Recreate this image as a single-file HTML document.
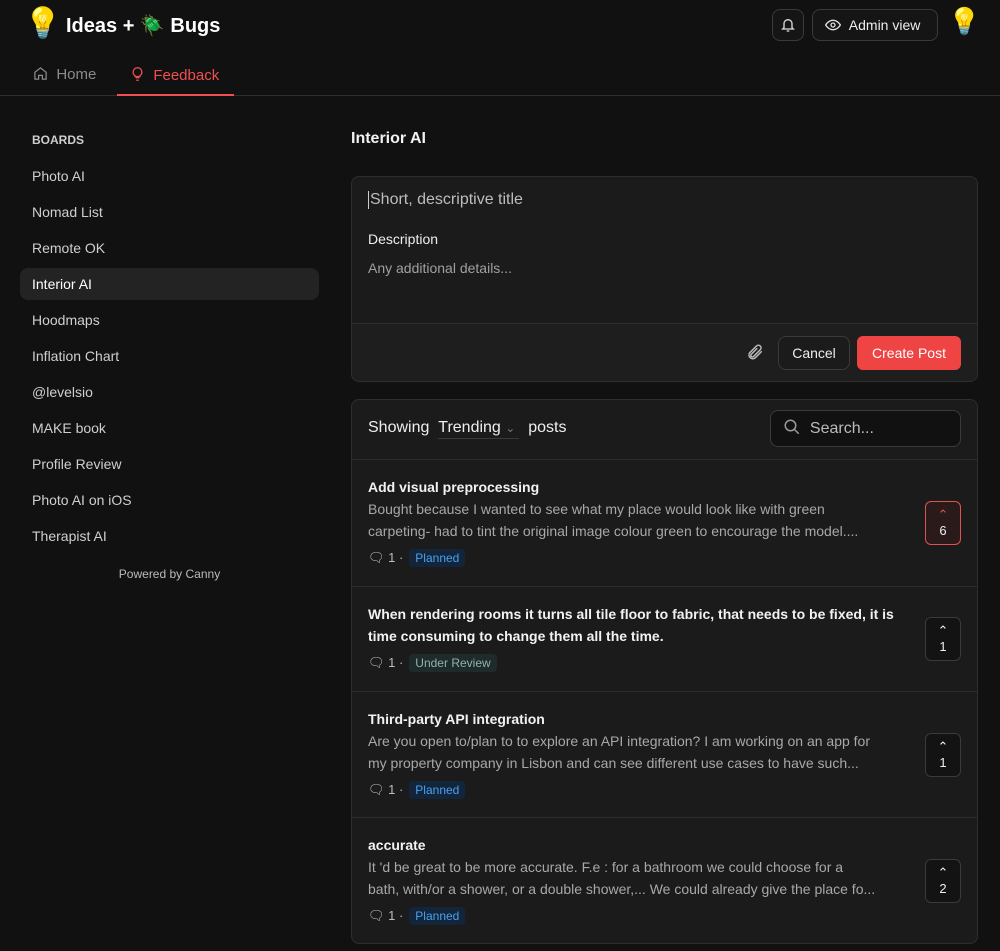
<!DOCTYPE html>
<html><head><meta charset="utf-8"><style>
*{box-sizing:border-box;margin:0;padding:0}
body{width:1000px;height:951px;overflow:hidden;background:#111111;font-family:"Liberation Sans",sans-serif;color:#e8e8e8;position:relative}
.abs{position:absolute}
.hdr{position:absolute;left:0;top:0;width:1000px;height:96px;border-bottom:1px solid #2e2e2e}
.btn{position:absolute;border:1px solid #3a3a3a;border-radius:8px;background:#151515}
.side a{position:absolute;left:20px;width:299px;height:32px;line-height:32px;padding-left:12px;font-size:14px;color:#cfcfcf;border-radius:8px}
.card{position:absolute;left:351px;width:627px;background:#1b1b1b;border:1px solid #2e2e2e;border-radius:8px;overflow:hidden}
.post{position:absolute;left:0;width:625px;border-top:1px solid #2e2e2e;padding:16px 16px}
.pt{font-size:14px;font-weight:bold;color:#f2f2f2;line-height:22px;width:540px}
.pd{font-size:14px;color:#a8a8a8;line-height:22px;width:540px;white-space:nowrap}
.meta{font-size:13px;color:#bbb;margin-top:6px;height:20px;display:flex;align-items:center;gap:6px}
.tag{font-size:12px;padding:2px 6px;border-radius:4px;background:#13253a;color:#4aa0ef}
.tag.rev{background:#1f2a2a;color:#8fb3b0}
.vote{position:absolute;right:16px;width:36px;height:44px;border:1px solid #3a3a3a;border-radius:6px;background:#131313;text-align:center;font-size:13px;color:#eee;padding-top:5px;line-height:16px}
</style></head><body>
<div class="hdr">
<div class="abs" style="left:24px;top:6px;font-size:30px">💡</div>
<div class="abs" style="left:66px;top:13px;font-size:20px;font-weight:bold;color:#fff">Ideas + 🪲 Bugs</div>
<div class="abs" style="left:33px;top:66px;font-size:15px;color:#8a8a8a"><svg width="15" height="15" viewBox="0 0 24 24" fill="none" stroke="#8a8a8a" stroke-width="2" style="vertical-align:-2px"><path d="M3 10l9-7 9 7v11H15v-6H9v6H3z"/></svg> &nbsp;Home</div>
<div class="abs" style="left:130px;top:66px;font-size:15px;color:#ef4f4f"><svg width="15" height="16" viewBox="0 0 24 24" fill="none" stroke="#ef4f4f" stroke-width="2" style="vertical-align:-2px"><path d="M9 18h6M10 22h4M12 2a7 7 0 0 0-4 12.7V16h8v-1.3A7 7 0 0 0 12 2z"/></svg> &nbsp;Feedback</div>
<div class="abs" style="left:117px;top:94px;width:117px;height:2px;background:#ef4f4f"></div>
<div class="btn" style="left:772px;top:9px;width:32px;height:32px"><svg width="16" height="16" viewBox="0 0 24 24" fill="none" stroke="#ddd" stroke-width="2" style="margin:7px"><path d="M6 16V10a6 6 0 0 1 12 0v6l2 2H4zM10 21h4"/></svg></div>
<div class="btn" style="left:812px;top:9px;width:126px;height:32px;font-size:14px;color:#eee;line-height:30px;padding-left:12px"><svg width="16" height="16" viewBox="0 0 24 24" fill="none" stroke="#ddd" stroke-width="2" style="vertical-align:-3px"><path d="M1 12s4-7 11-7 11 7 11 7-4 7-11 7S1 12 1 12z"/><circle cx="12" cy="12" r="3"/></svg>&nbsp;&nbsp;Admin view</div>
<div class="abs" style="left:948px;top:6px;font-size:26px">💡</div>
</div>
<div class="side">
<div class="abs" style="left:32px;top:133px;font-size:12px;font-weight:bold;color:#cfcfcf">BOARDS</div>
<a style="top:160px">Photo AI</a><a style="top:196px">Nomad List</a><a style="top:232px">Remote OK</a>
<a style="top:268px;background:#232323;color:#fff">Interior AI</a><a style="top:304px">Hoodmaps</a><a style="top:340px">Inflation Chart</a>
<a style="top:376px">@levelsio</a><a style="top:412px">MAKE book</a><a style="top:448px">Profile Review</a>
<a style="top:484px">Photo AI on iOS</a><a style="top:520px">Therapist AI</a>
<div class="abs" style="left:20px;width:299px;top:567px;text-align:center;font-size:12px;color:#bbb">Powered by Canny</div>
</div>
<div class="abs" style="left:351px;top:130px;font-size:16px;font-weight:bold;color:#f2f2f2">Interior AI</div>
<div class="card" style="top:176px;height:206px">
<div class="abs" style="left:16px;top:14px;font-size:16px;color:#bdbdbd;border-left:1px solid #ccc;padding-left:1px">Short, descriptive title</div>
<div class="abs" style="left:16px;top:54px;font-size:14px;color:#eee">Description</div>
<div class="abs" style="left:16px;top:83px;font-size:14px;color:#a0a0a0">Any additional details...</div>
<div class="abs" style="left:0;top:146px;width:625px;height:60px;background:#1e1e1e;border-top:1px solid #2e2e2e"></div>
<svg class="abs" style="left:394px;top:166px" width="18" height="18" viewBox="0 0 24 24" fill="none" stroke="#bbb" stroke-width="2"><path d="M21 11l-9 9a5 5 0 0 1-7-7l9-9a3.5 3.5 0 0 1 5 5l-9 9a2 2 0 0 1-3-3l8-8"/></svg>
<div class="btn" style="left:426px;top:159px;width:72px;height:34px;font-size:14px;color:#eee;text-align:center;line-height:32px;background:#1b1b1b">Cancel</div>
<div class="abs" style="left:505px;top:159px;width:104px;height:34px;border-radius:6px;background:#ef4444;font-size:14px;color:#fff;text-align:center;line-height:34px">Create Post</div>
</div>
<div class="card" style="top:399px;height:545px">
<div class="abs" style="left:16px;top:19px;font-size:16px;color:#eee">Showing &nbsp;<span style="border-bottom:1px solid #3a3a3a;padding:0 4px 2px 0">Trending <span style="color:#777;font-size:12px">⌄</span></span>&nbsp; posts</div>
<div class="btn" style="left:418px;top:10px;width:191px;height:37px;background:#111;font-size:16px;color:#bbb;line-height:35px;padding-left:12px"><svg width="18" height="18" viewBox="0 0 24 24" fill="none" stroke="#999" stroke-width="2" style="vertical-align:-3px"><circle cx="10" cy="10" r="7"/><path d="M15 15l6 6"/></svg>&nbsp;&nbsp;Search...</div>
<div class="post" style="top:59px;height:127px"><div class="pt">Add visual preprocessing</div><div class="pd">Bought because I wanted to see what my place would look like with green<br>carpeting- had to tint the original image colour green to encourage the model....</div><div class="meta">🗨︎ 1 · <span class="tag">Planned</span></div>
<div class="vote" style="top:41px;border-color:#e05252;background:#2a1a1a;color:#eee"><span style="color:#e05252">⌃</span><br>6</div></div>
<div class="post" style="top:186px;height:105px"><div class="pt">When rendering rooms it turns all tile floor to fabric, that needs to be fixed, it is time consuming to change them all the time.</div><div class="meta">🗨︎ 1 · <span class="tag rev">Under Review</span></div>
<div class="vote" style="top:30px">⌃<br>1</div></div>
<div class="post" style="top:291px;height:126px"><div class="pt">Third-party API integration</div><div class="pd">Are you open to/plan to to explore an API integration? I am working on an app for<br>my property company in Lisbon and can see different use cases to have such...</div><div class="meta">🗨︎ 1 · <span class="tag">Planned</span></div>
<div class="vote" style="top:41px">⌃<br>1</div></div>
<div class="post" style="top:417px;height:128px"><div class="pt">accurate</div><div class="pd">It 'd be great to be more accurate. F.e : for a bathroom we could choose for a<br>bath, with/or a shower, or a double shower,... We could already give the place fo...</div><div class="meta">🗨︎ 1 · <span class="tag">Planned</span></div>
<div class="vote" style="top:41px">⌃<br>2</div></div>
</div>
</body></html>
